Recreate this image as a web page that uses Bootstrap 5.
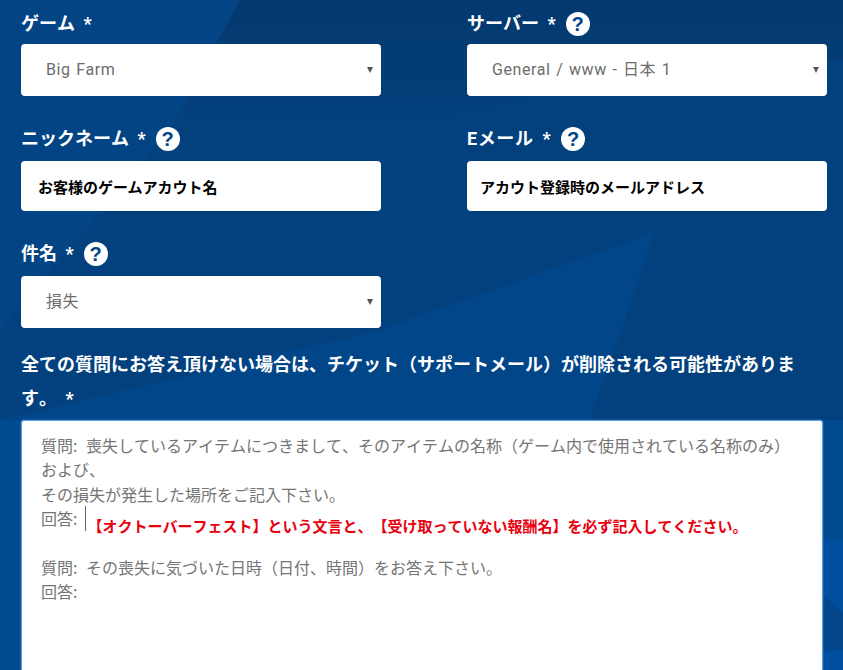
<!DOCTYPE html>
<html lang="ja">
<head>
<meta charset="utf-8">
<title>Support</title>
<link rel="stylesheet" href="https://cdn.jsdelivr.net/npm/bootstrap@5.3.0/dist/css/bootstrap.min.css">
<style>
html,body{height:670px;overflow:hidden}
body{
  font-family:"Roboto","Noto Sans CJK JP",sans-serif;
  text-spacing-trim:space-all;
  font-kerning:none;
  background-color:#03417e;
  background-repeat:no-repeat;
  background-size:843px 670px;
  background-image:url("data:image/svg+xml,%3Csvg xmlns='http://www.w3.org/2000/svg' viewBox='0 0 843 670'%3E%3Cdefs%3E%3ClinearGradient id='g' x1='0' y1='0' x2='0' y2='1'%3E%3Cstop offset='0' stop-color='%2304396f'/%3E%3Cstop offset='1' stop-color='%2303417e'/%3E%3C/linearGradient%3E%3C/defs%3E%3Crect width='843' height='670' fill='%2303417e'/%3E%3Cpath fill='%23024484' d='M0 0H240L170 130 0 330z'/%3E%3Cpath fill='url(%23g)' d='M240 0H843V60L640 70 370 140 170 130z'/%3E%3Cpath fill='%2302468a' d='M0 420 380 330 655 232 590 420z'/%3E%3Cpath fill='%23024a90' d='M0 420H843V670H0z'/%3E%3Cpath fill='%2303468c' d='M822 595 843 612V650L822 652z'/%3E%3Cpath fill='%23004f9e' d='M822 540H843V612L822 595zM822 652 843 650V670H822z'/%3E%3C/svg%3E");
}
.page-frm{padding:12px 16px 0 21px}
.fld-row{display:grid;grid-template-columns:360px 360px;column-gap:86px;width:806px}
.fld-lbl{display:flex;align-items:center;gap:10px;height:24px;color:#fff;font-weight:700;font-size:18px;line-height:24px;margin:0;word-spacing:4px}
.lbl-wide{letter-spacing:.6px}
.help-dot{width:24px;height:24px;border-radius:50%;background:#fff;color:#004488;font:700 20px/24px "Liberation Sans",sans-serif;text-align:center;flex:none}
.sel-box.form-select{height:52px;border:0;border-radius:4px;padding:0 24px 0 25px;font-size:16px;letter-spacing:.6px;word-spacing:1px;color:#6c6c6c;
  background-size:8px 6px;background-position:right 7px center;
  background-image:url("data:image/svg+xml,%3Csvg xmlns='http://www.w3.org/2000/svg' viewBox='0 0 8 6'%3E%3Cpath fill='%23555' d='M1 0h6L4 6z'/%3E%3C/svg%3E")}
.txt-box.form-control{height:50px;border:0;border-radius:4px;padding:4px 17px 0;font-size:15px;font-weight:700;color:#000}
.txt-box.form-control::placeholder{color:#000;opacity:1}
.txt-box.pad-near{padding-left:13px}
.cap-lbl{color:#fff;font-weight:700;font-size:18px;line-height:34px;width:790px;margin:0 0 4px;word-spacing:4px}
.area-box{width:802px;height:320px;background:#fff;border:1px solid #5b9be0;box-shadow:0 0 2px rgba(100,160,240,.8);border-radius:3px 3px 0 0;padding:12px 19px;color:#757575;font-family:"Noto Sans CJK JP",sans-serif;font-size:16px;line-height:24.3px;word-spacing:5px}
.ans-line{display:flex;align-items:flex-start}
.warn-txt{color:#e8000f;font-size:15px;font-weight:700;border-left:1px solid #666;margin-left:8px;padding:10px 0 0 1px;line-height:19px;height:25px;white-space:nowrap}
.gap-a{margin-top:8px}
.mt-lbl-a{margin-top:31px}
.gap-b{margin-top:10px}
.mt-lbl-b{margin-top:31px}
.mt-cap{margin-top:20px}
</style>
</head>
<body>
<form class="page-frm">
  <div class="fld-row">
    <div>
      <label class="fld-lbl">ゲーム *</label>
      <select class="form-select sel-box gap-a"><option>Big Farm</option></select>
    </div>
    <div>
      <label class="fld-lbl">サーバー * <span class="help-dot">?</span></label>
      <select class="form-select sel-box gap-a"><option>General / www - 日本 1</option></select>
    </div>
  </div>
  <div class="fld-row mt-lbl-a">
    <div>
      <label class="fld-lbl">ニックネーム * <span class="help-dot">?</span></label>
      <input class="form-control txt-box gap-b" placeholder="お客様のゲームアカウト名">
    </div>
    <div>
      <label class="fld-lbl lbl-wide">Eメール * <span class="help-dot">?</span></label>
      <input class="form-control txt-box pad-near gap-b" placeholder="アカウト登録時のメールアドレス">
    </div>
  </div>
  <div class="fld-row mt-lbl-b">
    <div>
      <label class="fld-lbl">件名 * <span class="help-dot">?</span></label>
      <select class="form-select sel-box gap-b"><option>損失</option></select>
    </div>
  </div>
  <p class="cap-lbl mt-cap">全ての質問にお答え頂けない場合は、チケット（サポートメール）が削除される可能性があります。 *</p>
  <div class="area-box">
    <div>質問: 喪失しているアイテムにつきまして、そのアイテムの名称（ゲーム内で使用されている名称のみ）<br>および、</div>
    <div>その損失が発生した場所をご記入下さい。</div>
    <div class="ans-line"><span>回答:</span><span class="warn-txt">【オクトーバーフェスト】という文言と、【受け取っていない報酬名】を必ず記入してください。</span></div>
    <div>&nbsp;</div>
    <div>質問: その喪失に気づいた日時（日付、時間）をお答え下さい。</div>
    <div>回答:</div>
  </div>
</form>
<script src="https://cdn.jsdelivr.net/npm/bootstrap@5.3.0/dist/js/bootstrap.bundle.min.js"></script>
</body>
</html>
